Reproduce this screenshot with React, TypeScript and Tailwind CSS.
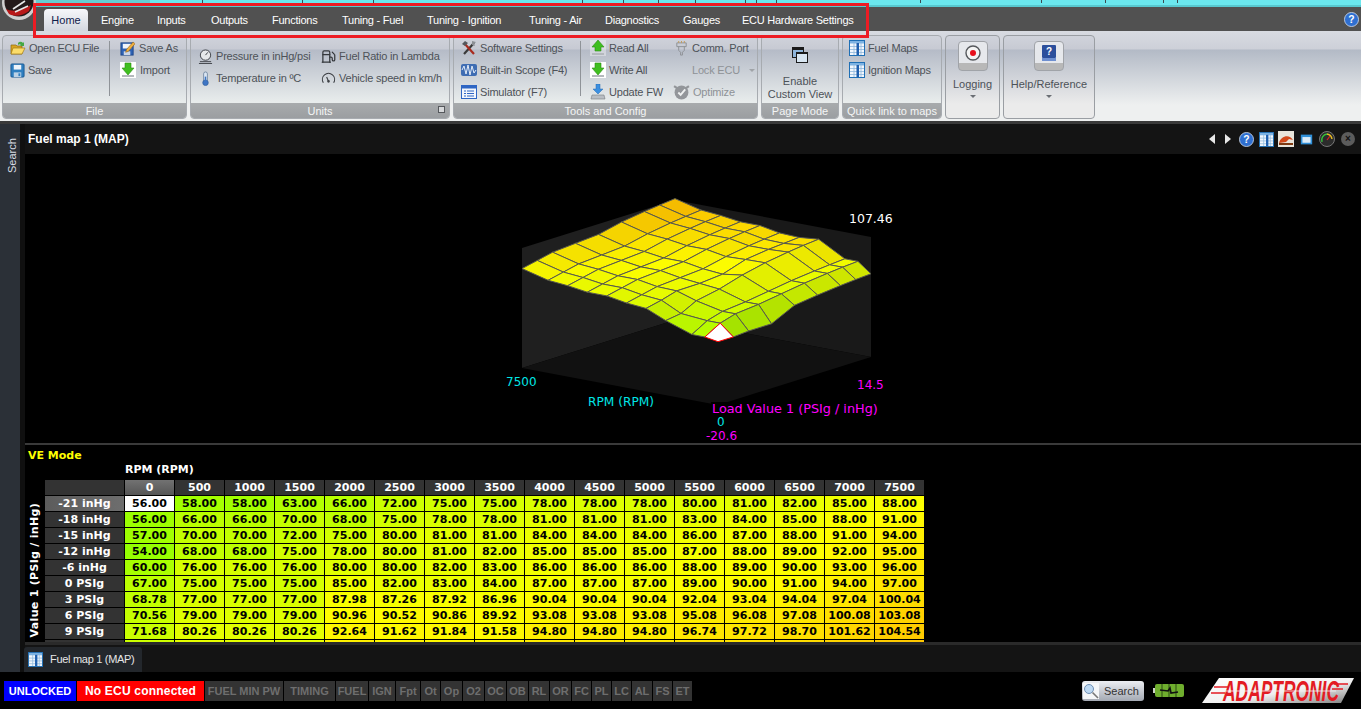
import { Fuel } from 'lucide-react'

const rpm = [0, 500, 1000, 1500, 2000, 2500, 3000, 3500, 4000, 4500, 5000, 5500, 6000, 6500, 7000, 7500]
const loads = ['-21 inHg', '-18 inHg', '-15 inHg', '-12 inHg', '-6 inHg', '0 PSIg', '3 PSIg', '6 PSIg', '9 PSIg', '12 PSIg']
const table = [
  [56, 58, 58, 63, 66, 72, 75, 75, 78, 78, 78, 80, 81, 82, 85, 88],
  [56, 66, 66, 70, 68, 75, 78, 78, 81, 81, 81, 83, 84, 85, 88, 91],
  [57, 70, 70, 72, 75, 80, 81, 81, 84, 84, 84, 86, 87, 88, 91, 94],
  [54, 68, 68, 75, 78, 80, 81, 82, 85, 85, 85, 87, 88, 89, 92, 95],
  [60, 76, 76, 76, 80, 80, 82, 83, 86, 86, 86, 88, 89, 90, 93, 96],
  [67, 75, 75, 75, 85, 82, 83, 84, 87, 87, 87, 89, 90, 91, 94, 97],
  [68.78, 77, 77, 77, 87.98, 87.26, 87.92, 86.96, 90.04, 90.04, 90.04, 92.04, 93.04, 94.04, 97.04, 100.04],
  [70.56, 79, 79, 79, 90.96, 90.52, 90.86, 89.92, 93.08, 93.08, 93.08, 95.08, 96.08, 97.08, 100.08, 103.08],
  [71.68, 80.26, 80.26, 80.26, 92.64, 91.62, 91.84, 91.58, 94.8, 94.8, 94.8, 96.74, 97.72, 98.7, 101.62, 104.54],
  [72.8, 81.5, 81.5, 81.5, 94.3, 92.7, 92.8, 93.2, 96.5, 96.5, 96.5, 98.4, 99.4, 100.3, 103.2, 106],
  [73.6, 82.5, 82.5, 82.5, 95.5, 93.8, 93.8, 94.5, 97.8, 97.8, 97.8, 99.7, 100.7, 101.7, 104.6, 107.46],
]

function heat(v: number, shade = 1) {
  let r = 255
  let g = 255
  if (v < 90) r = 150 + ((v - 54) / 36) * 105
  else g = 255 - ((v - 90) / 15) * 50
  return `rgb(${Math.round(r * shade)},${Math.round(g * shade)},0)`
}

// floor corners of the 3d box, page coordinates
const F = [718, 405]
const L = [522, 368]
const R = [871, 357]
const Z = 1.13

// the chart draws a coarser mesh than the table
const meshC = [0, 1, 2, 4, 5.5, 7, 8.5, 10, 11.5, 13, 15]
const meshR = [0, 1, 2, 3.5, 5, 6.5, 8, 9, 10]

function sample(c: number, r: number) {
  const c0 = Math.floor(c)
  const r0 = Math.floor(r)
  const c1 = Math.min(c0 + 1, 15)
  const r1 = Math.min(r0 + 1, 10)
  const fc = c - c0
  const fr = r - r0
  const top = table[r0][c0] * (1 - fc) + table[r0][c1] * fc
  const bot = table[r1][c0] * (1 - fc) + table[r1][c1] * fc
  return top * (1 - fr) + bot * fr
}

function pt(c: number, r: number) {
  const v = sample(c, r)
  const x = F[0] + (c / 15) * (L[0] - F[0]) + (r / 10) * (R[0] - F[0])
  const y = F[1] + (c / 15) * (L[1] - F[1]) + (r / 10) * (R[1] - F[1]) - v * Z
  return `${x.toFixed(1)},${y.toFixed(1)}`
}

function Surface() {
  const quads = []
  for (let i = meshR.length - 2; i >= 0; i--) {
    for (let j = meshC.length - 2; j >= 0; j--) {
      const r0 = meshR[i]
      const r1 = meshR[i + 1]
      const c0 = meshC[j]
      const c1 = meshC[j + 1]
      const a = sample(c0, r0)
      const b = sample(c1, r0)
      const d = sample(c0, r1)
      const e = sample(c1, r1)
      const slope = Math.abs(a + d - b - e) / 2 / (c1 - c0)
      const selected = i === 0 && j === 0
      quads.push(
        <polygon
          key={`${i}-${j}`}
          points={[pt(c0, r0), pt(c1, r0), pt(c1, r1), pt(c0, r1)].join(' ')}
          fill={selected ? '#ffffff' : heat((a + b + d + e) / 4 + 4, 0.99 - Math.min(slope, 10) * 0.01)}
          stroke={selected ? '#ff0000' : '#58584f'}
          strokeWidth={1}
        />,
      )
    }
  }
  return <>{quads}</>
}

function Chart() {
  const top = 107.46 * 1.117
  const B = [L[0] + R[0] - F[0], L[1] + R[1] - F[1]]
  return (
    <svg viewBox="25 154 1336 289" className="block w-[1336px] h-[289px] font-['DejaVu_Sans',sans-serif]">
      <polygon points={`${L[0]},${L[1]} ${L[0]},${L[1] - top} ${B[0]},${B[1] - top} ${B[0]},${B[1]}`} fill="#1f1f1f" />
      <polygon points={`${R[0]},${R[1]} ${R[0]},${R[1] - top} ${B[0]},${B[1] - top} ${B[0]},${B[1]}`} fill="#191919" />
      <polygon points={`${F[0]},${F[1]} ${L[0]},${L[1]} ${B[0]},${B[1]} ${R[0]},${R[1]}`} fill="#111111" />
      <Surface />
      <text x="849" y="223" fill="#fff" fontSize="12.5">107.46</text>
      <text x="506" y="386" fill="#00e6e6" fontSize="12">7500</text>
      <text x="588" y="406" fill="#00e6e6" fontSize="12.2">RPM (RPM)</text>
      <text x="857" y="389" fill="#ff00ff" fontSize="12">14.5</text>
      <rect x="711" y="402" width="170" height="14" fill="#000" />
      <text x="712" y="413" fill="#ff00ff" fontSize="12.8">Load Value 1 (PSIg / inHg)</text>
      <text x="717" y="426" fill="#00e6e6" fontSize="12">0</text>
      <text x="706" y="440" fill="#ff00ff" fontSize="12">-20.6</text>
    </svg>
  )
}

/* small ribbon icons */
function Floppy() {
  return (
    <svg viewBox="0 0 16 16" className="w-[15px] h-[15px] shrink-0">
      <rect x="1" y="1" width="14" height="14" rx="1" fill="#2f7fc0" stroke="#1d5b93" />
      <rect x="4" y="2" width="8" height="5" fill="#eef4fa" />
      <rect x="4" y="10" width="8" height="5" fill="#bcd2e6" />
      <rect x="9" y="11" width="2" height="3" fill="#2f7fc0" />
    </svg>
  )
}
function OpenFile() {
  return (
    <svg viewBox="0 0 16 16" className="w-4 h-4 shrink-0">
      <path d="M1 5h5l1 1h5v8H1z" fill="#d9a520" stroke="#8d6a12" strokeWidth=".7" />
      <path d="M3 8h12l-3 6H1z" fill="#fbdc6a" stroke="#a57d17" strokeWidth=".7" />
      <path d="M8 3a3 3 0 0 1 5 0l1-1v4h-4l1-1a2 2 0 0 0-3 0z" fill="#45a845" />
    </svg>
  )
}
function SaveAs() {
  return (
    <svg viewBox="0 0 16 16" className="w-[15px] h-[15px] shrink-0">
      <rect x="1" y="2" width="13" height="13" fill="#2d62b5" stroke="#1f4688" />
      <rect x="3" y="3" width="9" height="5" fill="#f1f4fa" />
      <rect x="4" y="11" width="7" height="4" fill="#c9d5e8" />
      <path d="M14 1l2 2-7 8-3 1 1-3z" fill="#f0b040" stroke="#8f5c14" strokeWidth=".6" />
    </svg>
  )
}
function UpDown({ up }: { up?: boolean }) {
  return (
    <svg viewBox="0 0 16 16" className="w-4 h-4 shrink-0">
      <rect width="16" height="16" fill="#fff" opacity={up ? 0.35 : 1} />
      <path d={up ? 'M8 0l6 7h-3v4H5V7H2z' : 'M5 1h6v5h3l-6 7-6-7h3z'} fill="#3fbf1f" stroke="#2c8a16" strokeWidth=".6" />
      <rect x="2" y="13" width="12" height="2" fill="#b4b8bd" />
    </svg>
  )
}
function Pressure() {
  return (
    <svg viewBox="0 0 16 16" className="w-[15px] h-[15px] shrink-0" fill="none" stroke="#3c3f44" strokeWidth="1">
      <circle cx="8" cy="6.5" r="5.5" fill="#e6e8ea" />
      <path d="M8 6.5l2.5-3" />
      <path d="M2 13.5h12M1 15.5h14" />
    </svg>
  )
}
function Thermo() {
  return (
    <svg viewBox="0 0 16 16" className="w-[15px] h-[15px] shrink-0">
      <rect x="6" y="1" width="4" height="11" rx="2" fill="#dbe6f2" stroke="#5f7896" strokeWidth=".8" />
      <circle cx="8" cy="12.5" r="3" fill="#3f76c4" stroke="#2f5996" strokeWidth=".6" />
      <rect x="7.2" y="6" width="1.6" height="6" fill="#3f76c4" />
    </svg>
  )
}
function Speedo() {
  return (
    <svg viewBox="0 0 16 16" className="w-[15px] h-[15px] shrink-0" fill="none" stroke="#3c3f44" strokeWidth="1.2">
      <path d="M2.5 12.5A6.5 6.5 0 1 1 13.5 12.5" />
      <path d="M8 11L6 6.5" />
      <circle cx="8" cy="11" r=".8" fill="#3c3f44" />
    </svg>
  )
}
function Tools() {
  return (
    <svg viewBox="0 0 16 16" className="w-4 h-4 shrink-0">
      <path d="M3 14L13 3" stroke="#3a3a3a" strokeWidth="2.2" />
      <path d="M3 3l10 11" stroke="#a82a1e" strokeWidth="2.2" />
      <path d="M1 4l3-3 3 2-3 3z" fill="#55585c" />
      <path d="M11 1l4 1-2 2 1 2-3-1z" fill="#8b8f94" />
    </svg>
  )
}
function Scope() {
  return (
    <svg viewBox="0 0 16 16" className="w-4 h-4 shrink-0">
      <rect y="2" width="16" height="12" rx="2" fill="#3f6db3" />
      <path d="M1 8l2-4 2 8 2-9 2 10 2-9 2 7 2-3" fill="none" stroke="#e3ecf8" strokeWidth="1" />
    </svg>
  )
}
function Simulator() {
  return (
    <svg viewBox="0 0 16 16" className="w-4 h-4 shrink-0">
      <rect x=".5" y="1.5" width="15" height="13" fill="#f3f7fd" stroke="#2f66c4" />
      <rect x="1" y="2" width="14" height="2.5" fill="#2f66c4" />
      <path d="M3 7h2M6 7h7M3 9.5h2M6 9.5h7M3 12h2M6 12h7" stroke="#2f66c4" />
    </svg>
  )
}
function Update() {
  return (
    <svg viewBox="0 0 16 16" className="w-4 h-4 shrink-0">
      <path d="M6 0h4v5h3l-5 5-5-5h3z" fill="#3b8fe0" stroke="#256ab0" strokeWidth=".5" />
      <path d="M2 11h12l1 4H1z" fill="#b9bec4" stroke="#777c82" strokeWidth=".6" />
    </svg>
  )
}
function CommPort() {
  return (
    <svg viewBox="0 0 16 16" className="w-[15px] h-[15px] shrink-0" fill="none" stroke="#8d9094" strokeWidth="1">
      <path d="M3 2h10v4H3zM5 6v4l2 2v3h2v-3l2-2V6" />
      <path d="M5 0v2M8 0v2M11 0v2" stroke="#c49a55" />
    </svg>
  )
}
function Optimize() {
  return (
    <svg viewBox="0 0 16 16" className="w-[17px] h-[17px] shrink-0">
      <circle cx="8" cy="8" r="6.5" fill="#93969a" />
      <path d="M1 2l3 2M15 2l-3 2" stroke="#93969a" strokeWidth="2" />
      <path d="M5 8l2.2 2.2L11.5 5" fill="none" stroke="#eef0f0" strokeWidth="1.8" />
    </svg>
  )
}
function MapGrid({ className = 'w-4 h-4' }: { className?: string }) {
  return (
    <svg viewBox="0 0 16 16" className={`${className} shrink-0`}>
      <rect x=".5" y=".5" width="15" height="15" fill="#f2f7fd" stroke="#1f6fb5" />
      <rect x="1" y="1" width="14" height="2.5" fill="#7db2e2" />
      <path d="M1 6.5h14M1 9.5h14M1 12.5h14M5 3v12M12 3v12" stroke="#8fb8dc" strokeWidth=".8" />
      <rect x="7.5" y="3" width="2.5" height="12" fill="#1f5fae" />
    </svg>
  )
}

function Item({ icon, label, dim }: { icon?: React.ReactNode; label: string; dim?: boolean }) {
  return (
    <div className={`h-[22px] flex items-center gap-[3px] whitespace-nowrap tracking-[-0.2px] ${dim ? 'text-[#8e9296]' : 'text-[#4d5258]'}`}>
      {icon}
      <span>{label}</span>
    </div>
  )
}

function Group({ title, className, corner, children }: { title: string; className: string; corner?: boolean; children: React.ReactNode }) {
  return (
    <div className={`h-[84px] flex flex-col rounded-[4px] border border-[#a7abb0] overflow-hidden bg-[linear-gradient(#d0d3db_0,#c7cad3_13px,#b5bbc7_14px,#e8ecec_66px)] ${className}`}>
      <div className="h-[67px] flex">{children}</div>
      <div className="h-[15px] pt-px flex items-center justify-center relative text-[#f4f5f5] bg-gradient-to-b from-[#a8abad] to-[#9b9ea1]">
        {title}
        {corner && <div className="absolute right-[4px] top-[3px] w-[7px] h-[7px] border border-[#55585c] bg-[#d6d8da]" />}
      </div>
    </div>
  )
}

function BigButton({ icon, label, className }: { icon: React.ReactNode; label: string; className: string }) {
  return (
    <div className={`h-[84px] flex flex-col items-center rounded-[4px] border border-[#9a9ea3] pt-[5px] text-[#4d5258] bg-[linear-gradient(#d0d3db_0,#c7cad3_13px,#b5bbc7_14px,#ebebeb_68px)] ${className}`}>
      <div className="w-[30px] h-[30px] rounded-[4px] border border-[#a0a3a8] flex items-start justify-center pt-[3px] bg-gradient-to-b from-[#e6e8ec] from-75% to-[#b8b8b8] to-75%">
        {icon}
      </div>
      <div className="mt-[7px] leading-[13px]">{label}</div>
      <div className="mt-[4px] w-0 h-0 border-x-[3px] border-x-transparent border-t-[3px] border-t-[#6a6e74]" />
    </div>
  )
}

function Ribbon() {
  return (
    <div className="h-[90px] pt-[4px] pl-[2px] flex gap-[3px] text-[11px] bg-[linear-gradient(#d8dbe1_0,#cdd0d8_18px,#b3bac6_19px,#eef0f0_74px)]">
      <Group title="File" className="w-[185px]">
        <div className="w-[106px] pl-[7px] pt-[1px] shrink-0 [&_span]:tracking-[-0.3px]">
          <Item icon={<OpenFile />} label="Open ECU File" />
          <Item icon={<Floppy />} label="Save" />
        </div>
        <div className="w-px h-[55px] mt-[5px] bg-[#8f9398] shrink-0" />
        <div className="pl-[10px] pt-[1px]">
          <div className="[&>div]:gap-[4px]">
            <Item icon={<SaveAs />} label="Save As" />
            <Item icon={<UpDown />} label="Import" />
          </div>
        </div>
      </Group>
      <Group title="Units" className="w-[260px]" corner>
        <div className="w-[130px] pl-[7px] pt-[9px] shrink-0">
          <Item icon={<Pressure />} label="Pressure in inHg/psi" />
          <Item icon={<Thermo />} label="Temperature in ºC" />
        </div>
        <div className="pt-[9px]">
          <Item icon={<Fuel className="w-[15px] h-[15px] text-[#35383c] shrink-0" />} label="Fuel Ratio in Lambda" />
          <Item icon={<Speedo />} label="Vehicle speed in km/h" />
        </div>
      </Group>
      <Group title="Tools and Config" className="w-[305px]">
        <div className="w-[126px] pl-[7px] pt-[1px] shrink-0">
          <Item icon={<Tools />} label="Software Settings" />
          <Item icon={<Scope />} label="Built-in Scope (F4)" />
          <Item icon={<Simulator />} label="Simulator (F7)" />
        </div>
        <div className="w-px h-[55px] mt-[5px] bg-[#8f9398] shrink-0" />
        <div className="w-[92px] pl-[9px] pt-[1px] shrink-0">
          <Item icon={<UpDown up />} label="Read All" />
          <Item icon={<UpDown />} label="Write All" />
          <Item icon={<Update />} label="Update FW" />
        </div>
        <div className="pt-[1px]">
          <div className="pl-px">
            <Item icon={<CommPort />} label="Comm. Port" />
          </div>
          <div className="pl-[19px] flex items-center gap-[9px]">
            <Item label="Lock ECU" dim />
            <div className="w-0 h-0 border-x-[3px] border-x-transparent border-t-[3px] border-t-[#a0a4a8]" />
          </div>
          <Item icon={<Optimize />} label="Optimize" dim />
        </div>
      </Group>
      <Group title="Page Mode" className="w-[78px]">
        <div className="w-full flex flex-col items-center pt-[11px] leading-[13px] text-[#4d5258]">
          <svg viewBox="0 0 16 16" className="w-4 h-4 mb-[12px] shrink-0">
            <rect x="0" y="0" width="12" height="11" fill="#1b1b1b" />
            <rect x="1" y="3" width="10" height="7" fill="#8fb6dc" />
            <rect x="4" y="5" width="12" height="11" fill="#1b1b1b" />
            <rect x="5" y="7" width="10" height="8" fill="#d8e6f2" />
          </svg>
          <div>Enable</div>
          <div>Custom View</div>
        </div>
      </Group>
      <Group title="Quick link to maps" className="w-[100px]">
        <div className="pl-[6px] pt-[1px]">
          <Item icon={<MapGrid />} label="Fuel Maps" />
          <Item icon={<MapGrid />} label="Ignition Maps" />
        </div>
      </Group>
      <BigButton
        className="w-[55px]"
        label="Logging"
        icon={
          <svg viewBox="0 0 16 16" className="w-4 h-4">
            <circle cx="8" cy="8" r="7" fill="#f4f4f4" stroke="#55585c" strokeWidth="1.4" />
            <circle cx="8" cy="8" r="3" fill="#e8101c" />
          </svg>
        }
      />
      <BigButton
        className="w-[92px]"
        label="Help/Reference"
        icon={
          <svg viewBox="0 0 16 16" className="w-4 h-4">
            <rect x="1" y="0" width="14" height="13" rx="1" fill="#2c4f9c" />
            <rect x="1" y="13" width="14" height="3" fill="#6e8fd0" />
            <text x="8" y="10" textAnchor="middle" fontSize="10" fontWeight="bold" fill="#fff">?</text>
          </svg>
        }
      />
    </div>
  )
}

function HelpDot({ className = 'w-[15px] h-[15px]' }: { className?: string }) {
  return (
    <svg viewBox="0 0 16 16" className={className}>
      <circle cx="8" cy="8" r="7.5" fill="#2f6fd0" stroke="#dfe8f6" strokeWidth=".8" />
      <text x="8" y="12" textAnchor="middle" fontSize="11" fontWeight="bold" fill="#fff" fontFamily="Liberation Sans">?</text>
    </svg>
  )
}

function PanelIcons() {
  return (
    <div className="flex items-center ml-auto pr-[6px]">
      <div className="w-0 h-0 border-y-[5px] border-y-transparent border-r-[6px] border-r-[#e8e8e8] mr-[10px]" />
      <div className="w-0 h-0 border-y-[5px] border-y-transparent border-l-[6px] border-l-[#e8e8e8] mr-[8px]" />
      <HelpDot />
      <MapGrid className="w-[15px] h-[15px] ml-[5px]" />
      <svg viewBox="0 0 16 16" className="w-4 h-4 ml-[4px]">
        <rect width="16" height="16" fill="#e8e4da" />
        <path d="M1 12C3 4 12 3 15 9l-4-1-3 3z" fill="#d2491a" />
        <path d="M1 12h14v2H1z" fill="#7e3a12" />
      </svg>
      <svg viewBox="0 0 16 16" className="w-[13px] h-[13px] ml-[6px]">
        <rect x="1" y="2" width="14" height="12" fill="#2f8fd8" />
        <rect x="3" y="5" width="10" height="7" fill="#dcecf8" />
      </svg>
      <svg viewBox="0 0 16 16" className="w-4 h-4 ml-[6px]">
        <circle cx="8" cy="8" r="7.5" fill="#2c2c2c" stroke="#777" />
        <path d="M3 11A6 6 0 0 1 8 3" fill="none" stroke="#35c43a" strokeWidth="1.4" />
        <path d="M8 3A6 6 0 0 1 13 8" fill="none" stroke="#e8c020" strokeWidth="1.4" />
        <path d="M8 9l3-4" stroke="#e02020" strokeWidth="1.2" />
      </svg>
      <div className="ml-[6px] w-[14px] h-[14px] rounded-full bg-[#5c5c5c] flex items-center justify-center text-[#111] text-[10px] font-bold leading-none">×</div>
    </div>
  )
}

function Grid() {
  return (
    <div className="grid grid-cols-[79px_repeat(16,49px)] auto-rows-[15px] gap-px font-['DejaVu_Sans',sans-serif] font-bold text-[11px] leading-[15px] text-center">
      <div className="bg-[#333333]" />
      {rpm.map((v, i) => (
        <div key={v} className={i === 0 ? 'bg-gradient-to-b from-[#727272] to-[#565656] text-white' : 'bg-[#333333] text-white'}>{v}</div>
      ))}
      {loads.map((label, r) => (
        <div key={label} className="contents">
          {/* last row only peeks in below the panel edge, its figures are out of view */}
          <div className={r === 0 ? 'text-white bg-gradient-to-r from-[#5c5c5c] to-[#6e6e6e]' : 'text-white bg-[#333333]'}>{r < 9 ? label : ''}</div>
          {table[r].map((v, c) => (
            <div
              key={c}
              className="text-black"
              style={r === 0 && c === 0 ? { background: '#fff' } : { background: `linear-gradient(135deg, ${heat(v - 1)}, ${heat(v + 1.5)})` }}
            >
              {r < 9 ? v.toFixed(2) : ''}
            </div>
          ))}
        </div>
      ))}
    </div>
  )
}

const chips = [
  { t: 'FUEL MIN PW', w: 'w-[78px]' },
  { t: 'TIMING', w: 'w-[51px]' },
  { t: 'FUEL', w: 'w-[32px]' },
  { t: 'IGN', w: 'w-[26px]' },
  { t: 'Fpt', w: 'w-[24px]' },
  { t: 'Ot', w: 'w-[19px]' },
  { t: 'Op', w: 'w-[21px]' },
  { t: 'O2', w: 'w-[21px]' },
  { t: 'OC', w: 'w-[21px]' },
  { t: 'OB', w: 'w-[21px]' },
  { t: 'RL', w: 'w-[20px]' },
  { t: 'OR', w: 'w-[21px]' },
  { t: 'FC', w: 'w-[19px]' },
  { t: 'PL', w: 'w-[19px]' },
  { t: 'LC', w: 'w-[19px]' },
  { t: 'AL', w: 'w-[20px]' },
  { t: 'FS', w: 'w-[19px]' },
  { t: 'ET', w: 'w-[19px]' },
]

function StatusBar() {
  return (
    <div className="h-[37px] bg-black flex items-start pt-[9px] pl-[4px] text-[12px] font-bold">
      <div className="w-[72px] h-[20px] bg-[#0000ff] text-white text-[11px] flex items-center justify-center">UNLOCKED</div>
      <div className="w-[127px] h-[20px] ml-px bg-[#ff0000] text-white tracking-[0.2px] flex items-center justify-center">No ECU connected</div>
      <div className="flex gap-px ml-px">
        {chips.map((c) => (
          <div key={c.t} className={`${c.w} h-[20px] bg-[#333333] text-[#6e6e6e] flex items-center justify-center whitespace-nowrap text-[11px]`}>{c.t}</div>
        ))}
      </div>
      <div className="ml-auto flex items-start pr-[7px]">
        <div className="w-[62px] h-[20px] rounded-[3px] flex items-center gap-[5px] pl-[1px] font-normal text-[11px] text-[#333] bg-gradient-to-b from-[#eceef2] to-[#a4a9b3]">
          <svg viewBox="0 0 16 16" className="w-4 h-4 shrink-0">
            <rect width="16" height="16" fill="#f4f6f8" />
            <circle cx="6" cy="6" r="4.5" fill="#bcd8f2" stroke="#6f8fb4" />
            <path d="M9.5 9.5L15 15" stroke="#777" strokeWidth="1.6" />
          </svg>
          Search
        </div>
        <svg viewBox="0 0 31 13" className="w-[31px] h-[13px] ml-[9px] mt-[3px]">
          <rect x="2" y="0" width="29" height="13" rx="2" fill="#6fae2e" />
          <rect x="0" y="4" width="2" height="5" fill="#cfd2c8" />
          <path d="M9 0v13M16 0v13M23 0v13" stroke="#2a4a12" />
          <path d="M7 6l8 1 2-3 1 5 7-1" fill="none" stroke="#111" strokeWidth="1.6" />
        </svg>
        <svg viewBox="0 -3 152 32" className="w-[152px] h-[32px] ml-[18px] -mt-[6px]">
          <defs>
            <linearGradient id="badge" x1="0" y1="0" x2="1" y2="1">
              <stop offset="0" stopColor="#ffffff" />
              <stop offset="0.55" stopColor="#f0f0f0" />
              <stop offset="1" stopColor="#808080" />
            </linearGradient>
          </defs>
          <polygon points="17,0 152,0 139,25 0,25" fill="url(#badge)" />
          <text x="79" y="23" textAnchor="middle" fontFamily="Liberation Sans" fontStyle="italic" fontWeight="bold" fontSize="29" fill="#e31b23" textLength="116" lengthAdjust="spacingAndGlyphs">ADAPTRONIC</text>
          <path d="M9 15h14M12 9h14M132 6h14M130 11h11" stroke="#e31b23" strokeWidth="1.6" />
          <path d="M22 13h112" stroke="#f4f4f4" strokeWidth="0.8" />
        </svg>
      </div>
    </div>
  )
}

const tabs = [
  { t: 'Engine', w: 'w-[56px]' },
  { t: 'Inputs', w: 'w-[54px]' },
  { t: 'Outputs', w: 'w-[61px]' },
  { t: 'Functions', w: 'w-[70px]' },
  { t: 'Tuning - Fuel', w: 'w-[85px]' },
  { t: 'Tuning - Ignition', w: 'w-[102px]' },
  { t: 'Tuning - Air', w: 'w-[76px]' },
  { t: 'Diagnostics', w: 'w-[78px]' },
  { t: 'Gauges', w: 'w-[59px]' },
  { t: 'ECU Hardware Settings', w: 'w-[113px]' },
]
const ticks = [202, 302, 373, 582, 623, 658, 695, 745, 756, 776, 920, 1041, 1105, 1163, 1177]

export default function App() {
  return (
    <div className="relative w-[1361px] h-[709px] overflow-hidden flex flex-col bg-black font-['Liberation_Sans',Arial,sans-serif]">
      {/* top strip + tab row */}
      <svg viewBox="0 0 1361 7" className="block w-[1361px] h-[7px] shrink-0">
        <rect width="1361" height="7" fill="#6be7ee" />
        <rect x="34" width="116" height="7" fill="#66cdd2" />
        <rect x="0" width="34" height="7" fill="#4f5050" />
        {ticks.map((x) => (
          <rect key={x} x={x} y="0" width="1" height="3" fill="#3c4a50" />
        ))}
        <rect y="5" x="34" width="1327" height="2" fill="#58c8cf" />
      </svg>
      <div className="h-[24px] shrink-0 bg-[#515151] flex items-end pl-[44px] pr-[2px] text-[11px] text-white">
        <div className="w-[44px] h-[22px] mr-[13px] flex items-center justify-center rounded-t-[4px] text-[#10204a] bg-gradient-to-b from-[#f6f7fa] to-[#d3d7df]">Home</div>
        {tabs.map((t) => (
          <div key={t.t} className={`${t.w} h-[22px] flex items-center whitespace-nowrap tracking-[-0.25px]`}>{t.t}</div>
        ))}
        <div className="ml-auto self-center">
          <HelpDot />
        </div>
      </div>
      <Ribbon />
      <div className="h-[3px] shrink-0 bg-[#3a3a3a]" />

      {/* docked panel */}
      <div className="flex-1 flex min-h-0 bg-[#141414]">
        <div className="w-[20px] bg-[#2b3037] shrink-0 flex justify-center pt-[14px] pl-[4px]">
          <span className="[writing-mode:vertical-rl] rotate-180 text-[11px] h-[36px] text-[#d8dde4] text-center">Search</span>
        </div>
        <div className="w-[5px] shrink-0 bg-[#101010]" />
        <div className="w-[1336px] flex flex-col min-h-0">
          <div className="h-[30px] shrink-0 flex items-center pl-[3px] text-[12px] font-bold text-white bg-[#141414]">
            Fuel map 1 (MAP)
            <PanelIcons />
          </div>
          <div className="h-[289px] shrink-0 bg-black">
            <Chart />
          </div>
          <div className="h-[2px] shrink-0 bg-[#3a3a3a]" />
          <div className="h-[197px] shrink-0 bg-black overflow-hidden font-['DejaVu_Sans',sans-serif] font-bold text-[11px]">
            <div className="h-[20px] pl-[3px] pt-[4px] leading-[13px] text-[#ffff00]">VE Mode</div>
            <div className="h-[15px] pl-[100px] -mt-[2px] mb-[2px] leading-[13px] text-white">RPM (RPM)</div>
            <div className="flex">
              <div className="w-[20px] h-[160px] flex items-end justify-center pb-[3px]">
                <span className="[writing-mode:vertical-rl] rotate-180 whitespace-nowrap text-white tracking-[0.3px]">Value 1 (PSIg / inHg)</span>
              </div>
              <Grid />
            </div>
          </div>
          <div className="h-[3px] shrink-0 bg-[#2a2a2a]" />
          <div className="h-[27px] shrink-0 bg-[#141414] flex items-end">
            <div className="w-[118px] h-[25px] -ml-px flex items-center gap-[7px] pl-[4px] rounded-t-[3px] text-[11px] tracking-[-0.3px] text-[#e6e6e6] bg-[#23272c]">
              <MapGrid className="w-[15px] h-[15px]" />
              Fuel map 1 (MAP)
            </div>
          </div>
        </div>
      </div>

      <StatusBar />

      {/* logo over the top corner */}
      <svg viewBox="0 0 36 22" className="absolute left-[1px] top-0 w-[36px] h-[22px]">
        <circle cx="18" cy="3" r="17" fill="#cfcfcf" />
        <circle cx="18" cy="2" r="14.5" fill="#241a1a" />
        <path d="M5 9c7 3 15 2 25-4l-2 6c-6 5-15 6-20 3z" fill="#b81818" />
        <path d="M12 9L24 1M14 12l13-6" stroke="#e8e8e8" strokeWidth="1.6" />
      </svg>
      {/* annotation box */}
      <div className="absolute left-[33px] top-[3px] w-[836px] h-[35px] border-[3px] border-[#ed1c24]" />
    </div>
  )
}
